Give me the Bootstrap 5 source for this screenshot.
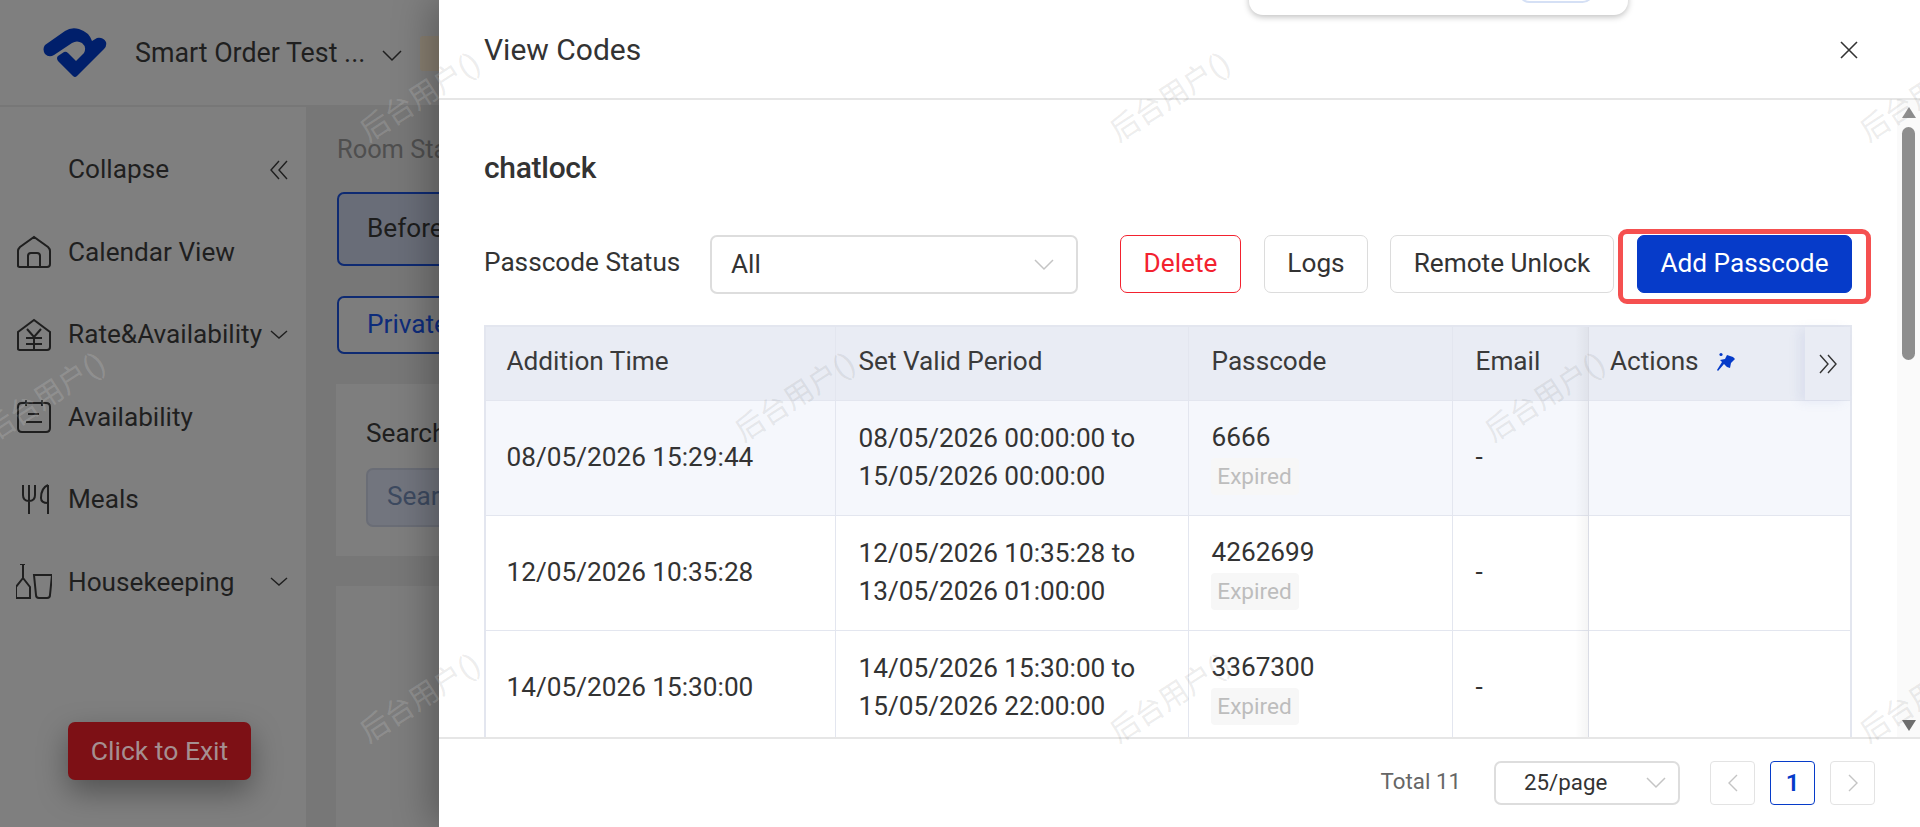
<!DOCTYPE html>
<html lang="en">
<head>
  <meta charset="UTF-8" />
  <meta name="viewport" content="width=device-width, initial-scale=1" />
  <title>View Codes</title>
  <link href="https://cdn.jsdelivr.net/npm/bootstrap@5.3.2/dist/css/bootstrap.min.css" rel="stylesheet" />
  <style>
    html, body { height: 100%; }
    body {
      font-family: Roboto, "Noto Sans CJK SC", sans-serif;
      font-size: 26.2px;
      color: #333;
      overflow: hidden;
      background: #fff;
    }
    .shell { width: 1920px; height: 827px; }

    /* dimmed page behind the drawer */
    .dim-page { width: 439px; height: 827px; background: #7f7f7f; color: #1f1f1f; position: relative; overflow: hidden; }
    .dim-head { height: 107px; flex: none; border-bottom: 2px solid #777; padding-left: 43px; }
    .dim-logo { width: 64px; height: 50px; margin-right: 28px; flex: none; }
    .dim-org { width: 247px; flex: none; white-space: nowrap; font-size: 26.8px; margin-top: 2px; }
    .dim-chev { flex: none; margin-top: 6px; }
    .dim-tag { width: 30px; height: 35px; background: #877e70; border-radius: 3px; margin-left: 18px; margin-top: 2px; flex: none; }
    .dim-side { width: 306px; flex: none; padding-top: 21.5px; position: relative; }
    .side-row { height: 82.5px; padding-left: 16px; white-space: nowrap; }
    .side-ico { width: 36px; height: 36px; margin-right: 16px; flex: none; }
    .side-row .side-arrow { position: absolute; left: 270px; }
    .exit-btn {
      position: absolute; left: 68px; top: 615px; width: 183px; height: 58px;
      background: #7d1015; color: #a58f91; border-radius: 7px; font-size: 26.5px;
      box-shadow: 0 12px 30px rgba(0, 0, 0, .35);
    }
    .dim-main { width: 133px; flex: none; background: #777; padding-top: 26px; white-space: nowrap; }
    .dim-title { color: #4f4f4f; padding-left: 31px; height: 59px; font-size: 25.4px; line-height: 32px; }
    .dim-tab { margin-left: 31px; width: 200px; border: 2px solid #0e2a72; border-radius: 7px; padding-left: 28px; }
    .dim-tab-a { height: 74px; background: #696d78; color: #1d1d1d; line-height: 68px; margin-bottom: 30px; }
    .dim-tab-b { height: 58px; background: #7d7d7d; color: #0e2c7b; line-height: 52px; }
    .dim-search { margin-left: 30px; margin-top: 30px; background: #7e7e7e; height: 172px; padding: 30px 0 0 30px; }
    .dim-input { width: 200px; height: 59px; margin-top: 15px; border: 2px solid #6a6d76; border-radius: 7px; background: #72757e; color: #3d4a60; padding-left: 19px; line-height: 52px; }
    .dim-next { margin-left: 30px; margin-top: 30px; height: 260px; background: #7d7d7d; }

    /* drawer */
    .drawer { flex: 1 1 0; min-width: 0; position: relative; background: #fff; box-shadow: -8px 0 36px rgba(0, 0, 0, .28); overflow: hidden; }
    .drawer-head { height: 100px; flex: none; border-bottom: 2px solid #e6e6e6; padding: 0 62px 0 45px; }
    .drawer-title { font-size: 30px; }
    .drawer-close { margin-top: 1px; }
    .float-bar { position: absolute; left: 810px; top: -40px; width: 379px; height: 55px; background: #fff; border-radius: 14px; box-shadow: 0 2px 6px rgba(0, 0, 0, .25); z-index: 3; }
    .float-pill { position: absolute; left: 269px; top: 20px; width: 76px; height: 23px; border: 2px solid #d5e0f5; border-radius: 12px; background: #fff; }
    .drawer-body { height: 637px; padding: 0 45px; overflow: hidden; position: relative; }
    .lock-name { font-size: 30px; font-weight: 500; margin-top: 50px; line-height: 36px; height: 36px; letter-spacing: -.3px; }
    .tools { margin-top: 49px; height: 59px; }
    .status-lbl { width: 226px; flex: none; margin-top: -4px; white-space: nowrap; }
    .status-sel { width: 368px; height: 59px; border: 2px solid #ddd; border-radius: 7px; padding: 0 22px 0 19px; flex: none; margin-right: 42px; }
    .tool-btn {
      height: 58px; padding: 0; border-radius: 7px; font-size: 26.2px; white-space: nowrap;
      background: #fff; color: #333; border: 1px solid #dcdcdc; position: relative;
    }
    .tool-del { width: 121px; margin-right: 23px; border-color: #f3222f; color: #f3222f; }
    .tool-log { width: 104px; margin-right: 22px; }
    .tool-rem { width: 224px; margin-right: 23px; }
    .tool-add { width: 215px; background: #063bc9; color: #fff; border-color: #063bc9; }
    .red-mark { position: absolute; left: -20px; right: -20px; top: -7px; bottom: -12px; border: 5px solid #f55050; border-radius: 9px; }

    .codes-wrap { margin-top: 31px; width: 1368px; position: relative; border-top: 2px solid #e3e6ef; border-left: 2px solid #e3e6ef; border-right: 2px solid #e3e6ef; }
    .codes { table-layout: fixed; width: 100%; margin: 0; --bs-table-border-color: #e3e6ef; color: #333; }
    .codes > :not(caption) > * > * { padding: 0 0 2px 23px; vertical-align: middle; border-width: 0 1px 1px 0; }
    .codes > :not(caption) > * > :first-child { padding-left: 20.5px; }
    .codes th { height: 73px; background: #e9ecf4; font-weight: 400; color: #3a3a3a; padding-bottom: 4px !important; }
    .codes td { height: 115px; background: #fff; line-height: 38px; }
    .codes tr.row-on td { background: #f5f7fc; }
    .codes .col-fix { position: relative; border-right: 0; padding-left: 21.5px !important; }
    .codes .col-fix::before { content: ""; position: absolute; left: -14px; width: 14px; top: 0; bottom: -1px; background: linear-gradient(to right, rgba(0, 0, 0, 0), rgba(0, 0, 0, .045)); }
    .tag-exp { display: block; width: 88px; height: 37px; line-height: 37px; text-align: center; background: #f7f7f7; color: #bdbdbd; border-radius: 4px; font-size: 22.6px; margin: 3px 0 -3px -1px; }
    .codes .cell-pass { line-height: 36px; padding-top: 2px; padding-bottom: 0; }
    .cell-pass > span:first-child { display: block; margin-top: -6px; }
    .pin-ico { width: 20px; height: 20px; margin-left: 11px; vertical-align: -2px; }
    .more-cell { position: absolute; right: 0; top: 0; width: 45px; height: 73px; background: #e9ecf4; box-shadow: -6px 2px 10px rgba(120, 140, 200, .12); }

    .sbar { position: absolute; right: 0; top: 0; bottom: 0; width: 23px; background: #fafafa; }
    .sbar-thumb { position: absolute; left: 5px; top: 27px; width: 13px; height: 233px; background: #8e8e8e; border-radius: 7px; }
    .sbar-up, .sbar-dn { position: absolute; left: 5px; width: 0; height: 0; border-left: 7px solid transparent; border-right: 7px solid transparent; }
    .sbar-up { top: 7px; border-bottom: 11px solid #8e8e8e; }
    .sbar-dn { bottom: 6px; border-top: 11px solid #6e6e6e; }

    .drawer-foot { height: 90px; flex: none; border-top: 2px solid #e6e6e6; padding-right: 45px; font-size: 22.3px; }
    .foot-total { color: #666; margin-right: 33px; margin-top: -2px; }
    .foot-sel { width: 186px; height: 44px; border: 2px solid #ddd; border-radius: 7px; padding: 0 12px 0 28px; margin-right: 15px; }
    .page-cell { width: 45px; height: 44px; border: 1px solid #e3e3e3; border-radius: 4px; background: #fff; margin-left: 15px; }
    .page-on { border-color: #063bc9; color: #063bc9; font-weight: 600; font-size: 24px; }

    /* faint repeated label */
    .wm { position: absolute; white-space: nowrap; font-size: 29px; line-height: 30px; transform: translate(-50%, -50%) rotate(-33deg); pointer-events: none; z-index: 4; }
    .wm-dim { color: rgba(255, 255, 255, .15); }
    .wm-lite { color: rgba(120, 120, 120, .15); }
  </style>
</head>
<body>
  <div class="shell d-flex">
    <!-- page behind the drawer -->
    <div class="dim-page d-flex flex-column">
      <div class="dim-head d-flex align-items-center">
        <svg class="dim-logo" viewBox="0 0 64 50">
          <path d="M2 17 L22 3 Q28 -1 36 1 Q46 4 49 13 L54 10 Q60 9 63 14 Q64 18 61 21 L34 48 Q32 50 30 48 L15 33 Q13 30 15 28 L21 24 Q23 23 25 25 L33 33 L41 25 Q44 19 39 15 Q34 12 29 15 L11 27 Q6 30 2 26 Q-1 21 2 17 Z" fill="#001f6b"/>
        </svg>
        <span class="dim-org">Smart Order Test ...</span>
        <svg class="dim-chev" width="20" height="12" viewBox="0 0 20 12"><path d="M1 1 L10 10 L19 1" fill="none" stroke="#1f1f1f" stroke-width="1.5"/></svg>
        <span class="dim-tag"></span>
      </div>
      <div class="d-flex flex-grow-1">
        <div class="dim-side">
          <div class="side-row d-flex align-items-center">
            <span class="side-ico"></span><span>Collapse</span>
            <svg class="side-arrow" width="18" height="20" viewBox="0 0 18 20"><path d="M9 1 L1 10 L9 19 M17 1 L9 10 L17 19" fill="none" stroke="#1f1f1f" stroke-width="1.4"/></svg>
          </div>
          <div class="side-row d-flex align-items-center">
            <svg class="side-ico" viewBox="0 0 36 36"><path d="M2 32 V17 Q2 15 4 13 L18 3 L32 13 Q34 15 34 17 V30 Q34 33 31 33 H5 Q2 33 2 32 Z M12 33 V22 Q12 19 15 19 H21 Q24 19 24 22 V33" fill="none" stroke="#1f1f1f" stroke-width="2"/></svg>
            <span>Calendar View</span>
          </div>
          <div class="side-row d-flex align-items-center">
            <svg class="side-ico" viewBox="0 0 36 36"><path d="M2 32 V15 L18 3 L34 15 V30 Q34 33 31 33 H5 Q2 33 2 32 Z M11 12 L18 20 L25 12 M10 21 H26 M10 27 H26 M18 20 V33" fill="none" stroke="#1f1f1f" stroke-width="2"/></svg>
            <span>Rate&amp;Availability</span>
            <svg class="side-arrow" width="18" height="10" viewBox="0 0 18 10"><path d="M1 1 L9 8 L17 1" fill="none" stroke="#1f1f1f" stroke-width="1.4"/></svg>
          </div>
          <div class="side-row d-flex align-items-center">
            <svg class="side-ico" viewBox="0 0 36 36"><path d="M6 4 H30 Q34 4 34 8 V29 Q34 33 30 33 H6 Q2 33 2 29 V8 Q2 4 6 4 Z M10 1 V7 M26 1 V7 M12 15 H23 M10 23 H26" fill="none" stroke="#1f1f1f" stroke-width="2"/></svg>
            <span>Availability</span>
          </div>
          <div class="side-row d-flex align-items-center">
            <svg class="side-ico" viewBox="0 0 36 36"><path d="M7 3 V13 Q7 19 13 19 Q19 19 19 13 V3 M13 3 V32 M32 3 Q25 6 25 16 Q25 21 32 21 M32 3 V32" fill="none" stroke="#1f1f1f" stroke-width="2"/></svg>
            <span>Meals</span>
          </div>
          <div class="side-row d-flex align-items-center">
            <svg class="side-ico" viewBox="0 0 36 36"><path d="M4 0 H9 M7 0 V14 L0 23 V34 H14 V23 L7 14 M18 11 H36 L34 31 Q34 34 31 34 H23 Q20 34 20 31 Z" fill="none" stroke="#1f1f1f" stroke-width="2"/></svg>
            <span>Housekeeping</span>
            <svg class="side-arrow" width="18" height="10" viewBox="0 0 18 10"><path d="M1 1 L9 8 L17 1" fill="none" stroke="#1f1f1f" stroke-width="1.4"/></svg>
          </div>
          <div class="exit-btn d-flex align-items-center justify-content-center">Click to Exit</div>
        </div>
        <div class="dim-main">
          <div class="dim-title">Room Status</div>
          <div class="dim-tab dim-tab-a">Before</div>
          <div class="dim-tab dim-tab-b">Private</div>
          <div class="dim-search">
            <div>Search</div>
            <div class="dim-input">Search</div>
          </div>
          <div class="dim-next"></div>
        </div>
      </div>
      <span class="wm wm-dim" style="left:420px;top:97px">后台用户()</span>
      <span class="wm wm-dim" style="left:45px;top:397px">后台用户()</span>
      <span class="wm wm-dim" style="left:420px;top:698px">后台用户()</span>
    </div>

    <!-- drawer -->
    <div class="drawer d-flex flex-column">
      <div class="float-bar"><div class="float-pill"></div></div>
      <div class="drawer-head d-flex align-items-center justify-content-between">
        <span class="drawer-title">View Codes</span>
        <svg class="drawer-close" width="18" height="18" viewBox="0 0 18 18"><path d="M1 1 L17 17 M17 1 L1 17" stroke="#333" stroke-width="1.6"/></svg>
      </div>
      <div class="drawer-body flex-grow-1">
        <div class="lock-name">chatlock</div>
        <div class="tools d-flex">
          <div class="status-lbl d-flex align-items-center">Passcode Status</div>
          <div class="status-sel d-flex align-items-center justify-content-between">
            <span>All</span>
            <svg width="20" height="12" viewBox="0 0 20 12"><path d="M1 1 L10 10 L19 1" fill="none" stroke="#c4c4c4" stroke-width="1.5"/></svg>
          </div>
          <button type="button" class="btn tool-btn tool-del">Delete</button>
          <button type="button" class="btn tool-btn tool-log">Logs</button>
          <button type="button" class="btn tool-btn tool-rem">Remote Unlock</button>
          <button type="button" class="btn tool-btn tool-add">Add Passcode<span class="red-mark"></span></button>
        </div>
        <div class="codes-wrap">
          <table class="table codes">
            <colgroup>
              <col style="width:349px" /><col style="width:353px" /><col style="width:264px" /><col style="width:136px" /><col />
            </colgroup>
            <thead>
              <tr>
                <th>Addition Time</th>
                <th>Set Valid Period</th>
                <th>Passcode</th>
                <th>Email</th>
                <th class="col-fix">Actions
                  <svg class="pin-ico" viewBox="0 0 20 20"><path d="M11 3 L17 5 L19 7 L15 11 L14 16 L11 15 L8 12 L2 19 L1 18 L6 10 L4 8 L9 7 Z" fill="#063bc9"/><circle cx="5" cy="2.5" r="1.6" fill="#063bc9"/></svg>
                </th>
              </tr>
            </thead>
            <tbody>
              <tr class="row-on">
                <td>08/05/2026 15:29:44</td>
                <td>08/05/2026 00:00:00 to<br />15/05/2026 00:00:00</td>
                <td class="cell-pass"><span>6666</span><span class="tag-exp">Expired</span></td>
                <td>-</td>
                <td class="col-fix"></td>
              </tr>
              <tr>
                <td>12/05/2026 10:35:28</td>
                <td>12/05/2026 10:35:28 to<br />13/05/2026 01:00:00</td>
                <td class="cell-pass"><span>4262699</span><span class="tag-exp">Expired</span></td>
                <td>-</td>
                <td class="col-fix"></td>
              </tr>
              <tr>
                <td>14/05/2026 15:30:00</td>
                <td>14/05/2026 15:30:00 to<br />15/05/2026 22:00:00</td>
                <td class="cell-pass"><span>3367300</span><span class="tag-exp">Expired</span></td>
                <td>-</td>
                <td class="col-fix"></td>
              </tr>
            </tbody>
          </table>
          <div class="more-cell d-flex align-items-center justify-content-center">
            <svg width="18" height="20" viewBox="0 0 18 20"><path d="M1 1 L9 10 L1 19 M9 1 L17 10 L9 19" fill="none" stroke="#333" stroke-width="1.4"/></svg>
          </div>
        </div>
        <div class="sbar">
          <span class="sbar-up"></span><div class="sbar-thumb"></div><span class="sbar-dn"></span>
        </div>
      </div>
      <div class="drawer-foot d-flex align-items-center justify-content-end">
        <span class="foot-total">Total 11</span>
        <div class="foot-sel d-flex align-items-center justify-content-between">
          <span>25/page</span>
          <svg width="20" height="12" viewBox="0 0 20 12"><path d="M1 1 L10 10 L19 1" fill="none" stroke="#c4c4c4" stroke-width="1.5"/></svg>
        </div>
        <div class="page-cell d-flex align-items-center justify-content-center">
          <svg width="10" height="18" viewBox="0 0 10 18"><path d="M9 1 L1 9 L9 17" fill="none" stroke="#c4c4c4" stroke-width="1.4"/></svg>
        </div>
        <div class="page-cell page-on d-flex align-items-center justify-content-center">1</div>
        <div class="page-cell d-flex align-items-center justify-content-center">
          <svg width="10" height="18" viewBox="0 0 10 18"><path d="M1 1 L9 9 L1 17" fill="none" stroke="#c4c4c4" stroke-width="1.4"/></svg>
        </div>
      </div>
      <span class="wm wm-lite" style="left:-19px;top:97px">后台用户()</span>
      <span class="wm wm-lite" style="left:731px;top:97px">后台用户()</span>
      <span class="wm wm-lite" style="left:1481px;top:97px">后台用户()</span>
      <span class="wm wm-lite" style="left:356px;top:397px">后台用户()</span>
      <span class="wm wm-lite" style="left:1106px;top:397px">后台用户()</span>
      <span class="wm wm-lite" style="left:-19px;top:698px">后台用户()</span>
      <span class="wm wm-lite" style="left:731px;top:698px">后台用户()</span>
      <span class="wm wm-lite" style="left:1481px;top:698px">后台用户()</span>
    </div>
  </div>
  <script src="https://cdn.jsdelivr.net/npm/bootstrap@5.3.2/dist/js/bootstrap.bundle.min.js"></script>
</body>
</html>
